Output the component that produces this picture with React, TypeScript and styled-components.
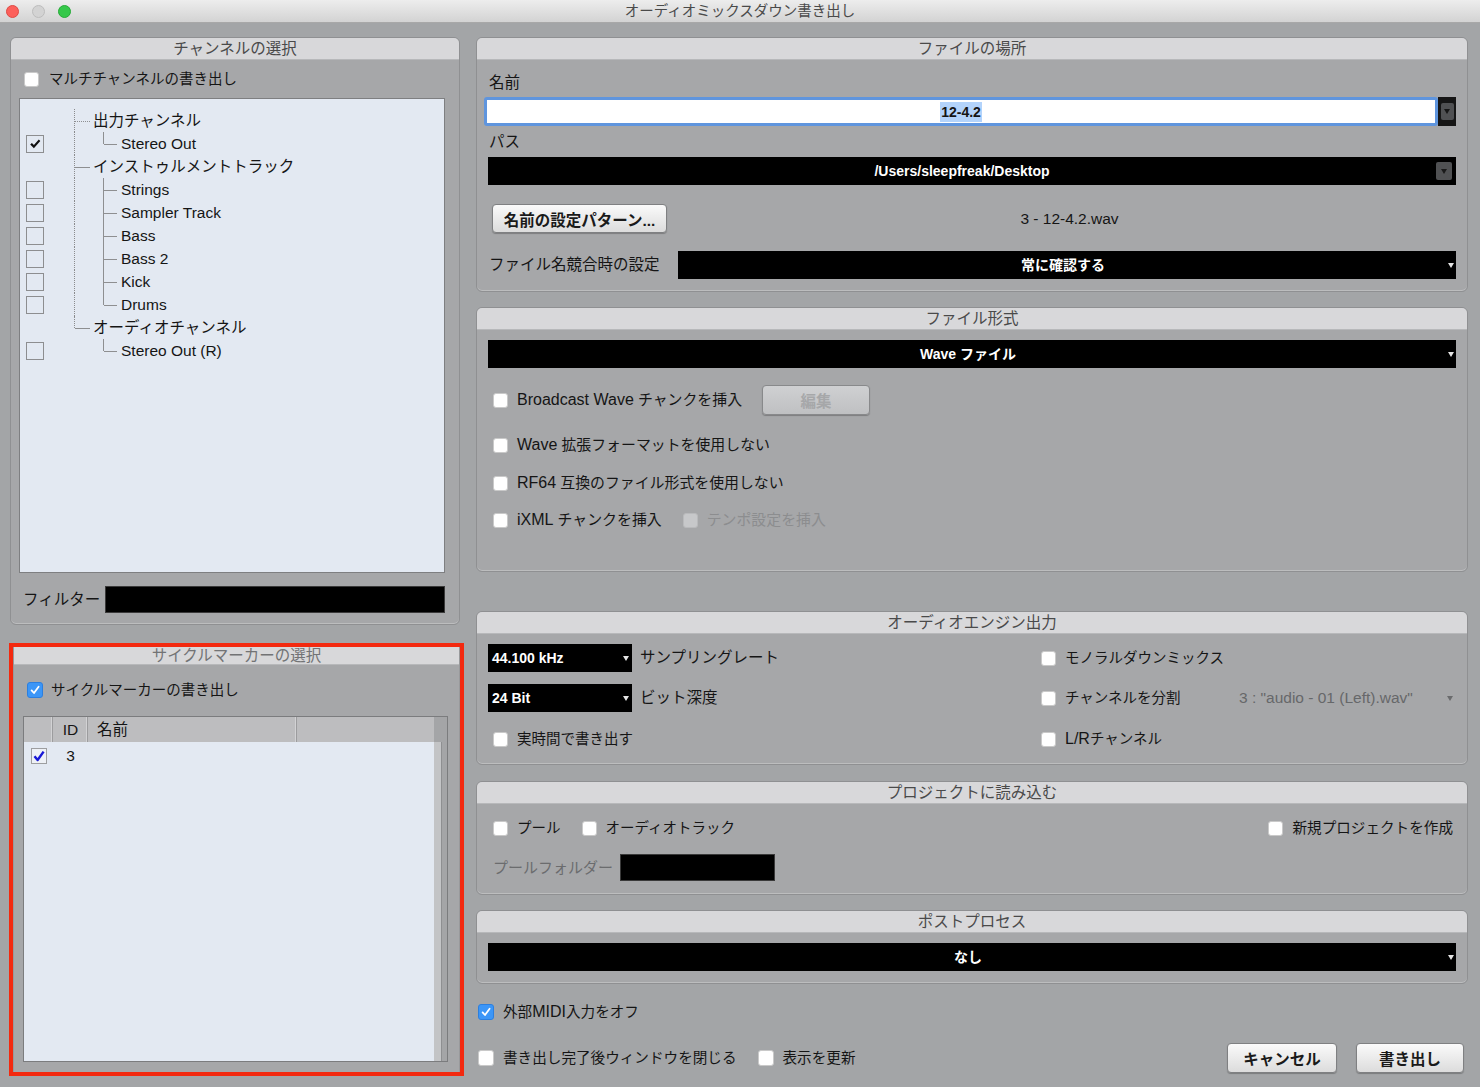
import React from 'react';
import styled, { createGlobalStyle } from 'styled-components';

const SANS = `"Liberation Sans", "Noto Sans CJK JP", sans-serif`;

const GlobalStyle = createGlobalStyle`
  html, body { margin: 0; padding: 0; background: #a3a5a7; }
  body { font-family: ${SANS}; color: #151515; }
  * { box-sizing: border-box; }
`;

const Window = styled.div`
  width: 1480px;
  height: 1087px;
  overflow: hidden;
  display: flex;
  flex-direction: column;
  background: #a3a5a7;
`;

const TitleBar = styled.header`
  flex: none;
  height: 23px;
  display: grid;
  grid-template-columns: 1fr auto 1fr;
  align-items: center;
  padding: 0 6px;
  background: linear-gradient(#ededed, #d3d3d3);
  border-bottom: 1px solid #a8a8a8;
`;

const Lights = styled.div`
  display: flex;
  gap: 13px;
`;

const Light = styled.span<{ $c: string; $b: string }>`
  width: 13px;
  height: 13px;
  border-radius: 50%;
  background: ${p => p.$c};
  border: 1px solid ${p => p.$b};
`;

const Title = styled.div`
  font-size: 14.5px;
  line-height: 22px;
  color: #4a4a4a;
`;

const Main = styled.main`
  flex: 1;
  display: flex;
  gap: 12px;
  padding: 14px 0 0 9px;
`;

const Column = styled.div<{ $w: number }>`
  width: ${p => p.$w}px;
  flex: none;
  display: flex;
  flex-direction: column;
`;

const Panel = styled.section<{ $h: number; $mt?: number; $ml?: number; $w?: number }>`
  flex: none;
  height: ${p => p.$h}px;
  width: ${p => (p.$w ? `${p.$w}px` : 'auto')};
  margin-top: ${p => p.$mt ?? 0}px;
  margin-left: ${p => p.$ml ?? 0}px;
  display: flex;
  flex-direction: column;
  background: #a6a7a9;
  border: 1px solid #8f9092;
  border-radius: 6px;
  overflow: hidden;
  box-shadow: inset 0 -1px 0 rgba(255, 255, 255, 0.25);
`;

const PanelHead = styled.div<{ $h?: number; $dim?: boolean }>`
  flex: none;
  height: ${p => p.$h ?? 22}px;
  line-height: ${p => (p.$h ?? 22) - 1}px;
  text-align: center;
  background: #d8d8da;
  border-bottom: 1px solid #b7b8ba;
  font-size: 15.5px;
  color: ${p => (p.$dim ? '#727375' : '#4a4a4a')};
`;

const PanelBody = styled.div<{ $px?: number }>`
  display: flex;
  flex-direction: column;
  padding: 0 ${p => p.$px ?? 11}px;
`;

const Row = styled.div<{ $mt?: number; $h?: number; $pl?: number; $pr?: number; $w?: number }>`
  flex: none;
  display: flex;
  align-items: center;
  width: ${p => (p.$w ? `${p.$w}px` : 'auto')};
  height: ${p => p.$h ?? 24}px;
  margin-top: ${p => p.$mt ?? 0}px;
  padding-left: ${p => p.$pl ?? 0}px;
  padding-right: ${p => p.$pr ?? 0}px;
`;

const Opt = styled.label<{ $fs?: number; $dim?: boolean; $gap?: number; $mr?: number; $w?: number }>`
  display: inline-flex;
  align-items: center;
  flex: none;
  gap: ${p => p.$gap ?? 9}px;
  margin-right: ${p => p.$mr ?? 0}px;
  width: ${p => (p.$w ? `${p.$w}px` : 'auto')};
  font-size: ${p => p.$fs ?? 14.9}px;
  line-height: 20px;
  white-space: nowrap;
  color: ${p => (p.$dim ? '#8c8d8f' : '#151515')};
`;

/* latin words sit a little larger than the kana, as on the mac */
const Lat = styled.span`
  font-size: 16px;
`;

const Box = styled.span<{ $on?: boolean; $off?: boolean; $s?: number }>`
  flex: none;
  width: ${p => p.$s ?? 15}px;
  height: ${p => p.$s ?? 15}px;
  border-radius: 3px;
  display: flex;
  align-items: center;
  justify-content: center;
  background: ${p => (p.$on ? '#3c96f7' : p.$off ? '#c7c8ca' : '#ffffff')};
  border: 1px solid ${p => (p.$on ? '#2c7fdf' : p.$off ? '#b9babc' : '#c9c9c9')};
`;

const Check = ({ on, off, s }: { on?: boolean; off?: boolean; s?: number }) => (
  <Box $on={on} $off={off} $s={s}>
    {on && (
      <svg width="12" height="12" viewBox="0 0 12 12">
        <path d="M2.6 6.4 L5 9 L9.6 2.8" stroke="#fff" strokeWidth="1.8" fill="none" strokeLinecap="round" strokeLinejoin="round" />
      </svg>
    )}
  </Box>
);

const Text = styled.span<{ $fs?: number; $c?: string; $w?: number; $ml?: number }>`
  flex: none;
  font-size: ${p => p.$fs ?? 15.5}px;
  line-height: 20px;
  white-space: nowrap;
  color: ${p => p.$c ?? '#151515'};
  width: ${p => (p.$w ? `${p.$w}px` : 'auto')};
  margin-left: ${p => p.$ml ?? 0}px;
`;

const FieldLabel = styled.div<{ $mt?: number }>`
  height: 20px;
  line-height: 20px;
  margin-top: ${p => p.$mt ?? 0}px;
  margin-left: 1px;
  font-size: 15.5px;
`;

const Select = styled.div<{ $mt?: number; $w?: number; $left?: boolean }>`
  flex: ${p => (p.$w ? 'none' : '1')};
  width: ${p => (p.$w ? `${p.$w}px` : 'auto')};
  height: 28px;
  margin-top: ${p => p.$mt ?? 0}px;
  display: flex;
  align-items: center;
  background: #000;
  color: #fff;
  font-weight: bold;
  font-size: 14px;
  padding-left: ${p => (p.$left ? 4 : 0)}px;
`;

const SelectText = styled.span<{ $left?: boolean }>`
  flex: 1;
  text-align: ${p => (p.$left ? 'left' : 'center')};
  white-space: nowrap;
  line-height: 28px;
`;

const Caret = styled.span<{ $c?: string; $mr?: number }>`
  flex: none;
  width: 0;
  height: 0;
  margin-right: ${p => p.$mr ?? 3}px;
  border-left: 3.5px solid transparent;
  border-right: 3.5px solid transparent;
  border-top: 5px solid ${p => p.$c ?? '#e4e4e4'};
`;

const ArrowBtn = styled.span<{ $mr?: number; $small?: boolean }>`
  flex: none;
  width: ${p => (p.$small ? 13 : 16)}px;
  height: ${p => (p.$small ? 17 : 18)}px;
  margin-right: ${p => p.$mr ?? 4}px;
  border-radius: 2px;
  background: #505153;
  display: flex;
  align-items: center;
  justify-content: center;
`;

const NameRow = styled.div`
  flex: none;
  height: 29px;
  margin-top: 4px;
  margin-left: -4px;
  display: flex;
`;

const NameField = styled.div`
  flex: 1;
  border: 3px solid #5f95de;
  border-radius: 3px;
  background: #fff;
  display: flex;
  align-items: center;
  justify-content: center;
  font-weight: bold;
  font-size: 14px;
`;

const Selected = styled.span`
  background: #b3d3fb;
  padding: 1px 1px;
  line-height: 18px;
`;

const NameArrow = styled.div`
  flex: none;
  width: 18px;
  background: #161616;
  display: flex;
  align-items: center;
  justify-content: center;
`;

const Btn = styled.button<{ $w: number; $h?: number; $ml?: number; $dis?: boolean }>`
  flex: none;
  width: ${p => p.$w}px;
  height: ${p => p.$h ?? 30}px;
  margin-left: ${p => p.$ml ?? 0}px;
  padding: 0;
  border: 1px solid ${p => (p.$dis ? '#88898b' : '#7f8082')};
  border-radius: 4px;
  background: ${p => (p.$dis ? 'linear-gradient(#cfd0d2, #bfc0c2)' : 'linear-gradient(#fafafa, #dcdcdc)')};
  box-shadow: 0 1px 1px rgba(0, 0, 0, 0.25);
  font-family: ${SANS};
  font-weight: bold;
  font-size: 15.5px;
  color: ${p => (p.$dis ? '#a6a7a9' : '#1a1a1a')};
`;

const FileName = styled.div`
  flex: 1;
  text-align: center;
  padding-left: 16px;
  font-size: 15.5px;
`;

const BlackBox = styled.div<{ $w?: number; $ml?: number }>`
  flex: ${p => (p.$w ? 'none' : '1')};
  width: ${p => (p.$w ? `${p.$w}px` : 'auto')};
  height: 27px;
  margin-left: ${p => p.$ml ?? 0}px;
  background: #000;
  border: 1px solid #3a3a3a;
`;

const Spacer = styled.span`
  flex: 1;
`;

/* ---------- channel tree ---------- */

const TreeBox = styled.div`
  flex: none;
  width: 426px;
  height: 475px;
  margin: 9px 0 0 8px;
  padding-top: 10px;
  background: #e3e9f2;
  border: 1px solid #7e7f81;
`;

const TreeRow = styled.div`
  height: 23px;
  display: flex;
  align-items: stretch;
  font-size: 15.5px;
`;

const CheckCell = styled.div`
  flex: none;
  width: 54px;
  padding-left: 6px;
  display: flex;
  align-items: center;
`;

const TreeCheck = styled.span`
  width: 18px;
  height: 18px;
  border: 1px solid #8d8e90;
  display: flex;
  align-items: center;
  justify-content: center;
`;

type Line = 'full' | 'top' | 'none';

const Trunk = styled.span<{ $v: Line; $h?: boolean; $dot?: boolean }>`
  position: relative;
  flex: none;
  width: 19px;
  &::before {
    content: '';
    position: absolute;
    left: 0;
    top: 0;
    bottom: ${p => (p.$v === 'top' ? '50%' : '0')};
    border-left: 1px dotted #8a8b8d;
    display: ${p => (p.$v === 'none' ? 'none' : 'block')};
  }
  &::after {
    content: '';
    position: absolute;
    left: 1px;
    right: 3px;
    top: 50%;
    border-top: 1px ${p => (p.$dot ? 'dotted' : 'solid')} #8e8f91;
    display: ${p => (p.$h ? 'block' : 'none')};
  }
`;

const Branch = styled.span<{ $v: Line }>`
  position: relative;
  flex: none;
  width: 14px;
  margin: 0 4px 0 10px;
  &::before {
    content: '';
    position: absolute;
    left: 0;
    top: 0;
    bottom: ${p => (p.$v === 'top' ? '50%' : '0')};
    border-left: 1px solid #8e8f91;
  }
  &::after {
    content: '';
    position: absolute;
    left: 1px;
    right: 0;
    top: 50%;
    border-top: 1px solid #8e8f91;
  }
`;

const TreeText = styled.span`
  align-self: center;
  line-height: 20px;
  white-space: nowrap;
`;

type TreeItem = { label: string; level: 1 | 2; trunk: Line; branch?: Line; check?: 'on' | 'off'; dot?: boolean };

const tree: TreeItem[] = [
  { label: '出力チャンネル', level: 1, trunk: 'full', dot: true },
  { label: 'Stereo Out', level: 2, trunk: 'full', branch: 'top', check: 'on' },
  { label: 'インストゥルメントトラック', level: 1, trunk: 'full' },
  { label: 'Strings', level: 2, trunk: 'full', branch: 'full', check: 'off' },
  { label: 'Sampler Track', level: 2, trunk: 'full', branch: 'full', check: 'off' },
  { label: 'Bass', level: 2, trunk: 'full', branch: 'full', check: 'off' },
  { label: 'Bass 2', level: 2, trunk: 'full', branch: 'full', check: 'off' },
  { label: 'Kick', level: 2, trunk: 'full', branch: 'full', check: 'off' },
  { label: 'Drums', level: 2, trunk: 'full', branch: 'top', check: 'off' },
  { label: 'オーディオチャンネル', level: 1, trunk: 'top' },
  { label: 'Stereo Out (R)', level: 2, trunk: 'none', branch: 'top', check: 'off' },
];

/* ---------- cycle marker ---------- */

const Highlight = styled.div`
  flex: none;
  margin-top: 18px;
  height: 433px;
  width: 455px;
  border: 4px solid #f3290f;
  display: flex;
`;

const CyclePanel = styled.section`
  flex: 1;
  display: flex;
  flex-direction: column;
  background: #a6a7a9;
  border-left: 1px solid #98999b;
  border-right: 1px solid #98999b;
`;

const Table = styled.div`
  flex: none;
  width: 425px;
  height: 346px;
  margin: 16px 0 0 9px;
  display: grid;
  grid-template-columns: 1fr 13px;
  grid-template-rows: 25px 1fr;
  border: 1px solid #7b7c7e;
  background: #e3e9f2;
`;

const HeadRow = styled.div`
  display: grid;
  grid-template-columns: 29px 35px 209px 1fr;
  background: #bdbdbf;
`;

const HeadCell = styled.div<{ $center?: boolean; $last?: boolean }>`
  font-size: 15.5px;
  line-height: 25px;
  padding-left: ${p => (p.$center ? 0 : 9)}px;
  text-align: ${p => (p.$center ? 'center' : 'left')};
  box-shadow: ${p => (p.$last ? 'none' : 'inset -1px 0 #9c9c9e, inset -2px 0 #d2d2d4')};
`;

const ScrollCol = styled.div`
  grid-row: 1 / 3;
  grid-column: 2;
  background: #a4a5a7;
  padding-top: 25px;
  display: flex;
`;

const ScrollTrack = styled.div`
  width: 8px;
  background: #c3c4c6;
  border-right: 1px solid #8e8f91;
`;

const BodyRows = styled.div`
  grid-column: 1;
  grid-row: 2;
`;

const DataRow = styled.div`
  height: 28px;
  display: grid;
  grid-template-columns: 29px 35px 1fr;
  align-items: center;
`;

const RowCheck = styled.span`
  width: 16px;
  height: 16px;
  margin-left: 7px;
  border: 1px solid #9d9ea0;
  background: #eef1f6;
  display: flex;
  align-items: center;
  justify-content: center;
`;

const Cell = styled.span`
  text-align: center;
  font-size: 15.5px;
`;

export default function App() {
  return (
    <Window>
      <GlobalStyle />
      <TitleBar>
        <Lights>
          <Light $c="#fc605b" $b="#de4a44" />
          <Light $c="#d3d3d3" $b="#bdbdbd" />
          <Light $c="#35c84a" $b="#26aa37" />
        </Lights>
        <Title>オーディオミックスダウン書き出し</Title>
        <span />
      </TitleBar>

      <Main>
        <Column $w={455}>
          <Panel $h={588} $ml={1} $w={450}>
            <PanelHead>チャンネルの選択</PanelHead>
            <PanelBody $px={0}>
              <Row $mt={9} $h={20} $pl={13}>
                <Opt $fs={14.5} $gap={10}>
                  <Check />
                  マルチチャンネルの書き出し
                </Opt>
              </Row>
              <TreeBox>
                {tree.map(item => (
                  <TreeRow key={item.label}>
                    <CheckCell>
                      {item.check && (
                        <TreeCheck>
                          {item.check === 'on' && (
                            <svg width="12" height="12" viewBox="0 0 12 12">
                              <path d="M1.2 6.6 L2.9 5 L4.9 7.1 L9.8 1.6 L11.3 3.1 L4.9 10.2 Z" fill="#111" />
                            </svg>
                          )}
                        </TreeCheck>
                      )}
                    </CheckCell>
                    <Trunk $v={item.trunk} $h={item.level === 1} $dot={item.dot} />
                    {item.level === 2 && <Branch $v={item.branch ?? 'full'} />}
                    <TreeText>{item.label}</TreeText>
                  </TreeRow>
                ))}
              </TreeBox>
              <Row $mt={13} $h={27} $pl={12} $pr={14}>
                <Text>フィルター</Text>
                <BlackBox $ml={5} />
              </Row>
            </PanelBody>
          </Panel>

          <Highlight>
            <CyclePanel>
              <PanelHead $h={18} $dim>
                サイクルマーカーの選択
              </PanelHead>
              <Row $mt={15} $h={20} $pl={13}>
                <Opt $fs={14.5} $gap={8}>
                  <Check on s={16} />
                  サイクルマーカーの書き出し
                </Opt>
              </Row>
              <Table>
                <HeadRow>
                  <HeadCell />
                  <HeadCell $center>ID</HeadCell>
                  <HeadCell>名前</HeadCell>
                  <HeadCell $last />
                </HeadRow>
                <BodyRows>
                  <DataRow>
                    <RowCheck>
                      <svg width="14" height="14" viewBox="0 0 14 14">
                        <path d="M2.5 7.2 L5.6 11 L11.6 2.6" stroke="#1818d6" strokeWidth="2.4" fill="none" strokeLinejoin="round" />
                      </svg>
                    </RowCheck>
                    <Cell>3</Cell>
                    <span />
                  </DataRow>
                </BodyRows>
                <ScrollCol>
                  <ScrollTrack />
                </ScrollCol>
              </Table>
            </CyclePanel>
          </Highlight>
        </Column>

        <Column $w={992}>
          <Panel $h={255}>
            <PanelHead>ファイルの場所</PanelHead>
            <PanelBody>
              <FieldLabel $mt={13}>名前</FieldLabel>
              <NameRow>
                <NameField>
                  <Selected>12-4.2</Selected>
                </NameField>
                <NameArrow>
                  <ArrowBtn $mr={0} $small>
                    <Caret $c="#161616" $mr={0} />
                  </ArrowBtn>
                </NameArrow>
              </NameRow>
              <FieldLabel $mt={6}>パス</FieldLabel>
              <Select $mt={5}>
                <SelectText>/Users/sleepfreak/Desktop</SelectText>
                <ArrowBtn>
                  <Caret $c="#1a1a1a" $mr={0} />
                </ArrowBtn>
              </Select>
              <Row $mt={19} $h={29}>
                <Btn $w={175} $h={29} $ml={4}>名前の設定パターン...</Btn>
                <FileName>3 - 12-4.2.wav</FileName>
              </Row>
              <Row $mt={18} $h={28}>
                <Text $w={189} $ml={1}>ファイル名競合時の設定</Text>
                <Select>
                  <SelectText>常に確認する</SelectText>
                  <Caret $mr={2} />
                </Select>
              </Row>
            </PanelBody>
          </Panel>

          <Panel $h={265} $mt={15}>
            <PanelHead>ファイル形式</PanelHead>
            <PanelBody>
              <Select $mt={10}>
                <SelectText>Wave ファイル</SelectText>
                <Caret $mr={2} />
              </Select>
              <Row $mt={17} $h={30} $pl={5}>
                <Opt $mr={20}>
                  <Check />
                  <span>
                    <Lat>Broadcast Wave</Lat> チャンクを挿入
                  </span>
                </Opt>
                <Btn $w={108} $dis>編集</Btn>
              </Row>
              <Row $mt={18} $pl={5}>
                <Opt>
                  <Check />
                  <span>
                    <Lat>Wave</Lat> 拡張フォーマットを使用しない
                  </span>
                </Opt>
              </Row>
              <Row $mt={14} $pl={5}>
                <Opt>
                  <Check />
                  <span>
                    <Lat>RF64</Lat> 互換のファイル形式を使用しない
                  </span>
                </Opt>
              </Row>
              <Row $mt={13} $pl={5}>
                <Opt $mr={21}>
                  <Check />
                  <span>
                    <Lat>iXML</Lat> チャンクを挿入
                  </span>
                </Opt>
                <Opt $dim>
                  <Check off />
                  テンポ設定を挿入
                </Opt>
              </Row>
            </PanelBody>
          </Panel>

          <Panel $h={154} $mt={39}>
            <PanelHead>オーディオエンジン出力</PanelHead>
            <PanelBody>
              <Row $mt={10} $h={28}>
                <Row $h={28} $w={553}>
                  <Select $w={144} $left>
                    <SelectText $left>44.100 kHz</SelectText>
                    <Caret $mr={3} />
                  </Select>
                  <Text $ml={8}>サンプリングレート</Text>
                </Row>
                <Opt $fs={14.5}>
                  <Check />
                  モノラルダウンミックス
                </Opt>
              </Row>
              <Row $mt={12} $h={28}>
                <Row $h={28} $w={553}>
                  <Select $w={144} $left>
                    <SelectText $left>24 Bit</SelectText>
                    <Caret $mr={3} />
                  </Select>
                  <Text $ml={8}>ビット深度</Text>
                </Row>
                <Opt $w={198} $fs={14.5}>
                  <Check />
                  チャンネルを分割
                </Opt>
                <Text $c="#66686a">3 : "audio - 01 (Left).wav"</Text>
                <Spacer />
                <Caret $c="#6a6b6d" $mr={3} />
              </Row>
              <Row $mt={13} $h={28}>
                <Row $h={28} $pl={5} $w={553}>
                  <Opt $fs={14.5}>
                    <Check />
                    実時間で書き出す
                  </Opt>
                </Row>
                <Opt $fs={14.5}>
                  <Check />
                  <span>
                    <Lat>L/R</Lat>チャンネル
                  </span>
                </Opt>
              </Row>
            </PanelBody>
          </Panel>

          <Panel $h={114} $mt={16}>
            <PanelHead>プロジェクトに読み込む</PanelHead>
            <PanelBody>
              <Row $mt={12} $pl={5} $pr={3}>
                <Opt $mr={21} $fs={14.5}>
                  <Check />
                  プール
                </Opt>
                <Opt $fs={14.5}>
                  <Check />
                  オーディオトラック
                </Opt>
                <Spacer />
                <Opt $fs={14.6}>
                  <Check />
                  新規プロジェクトを作成
                </Opt>
              </Row>
              <Row $mt={14} $h={27} $pl={5}>
                <Text $c="#6b6c6e" $w={127} $fs={15}>プールフォルダー</Text>
                <BlackBox $w={155} />
              </Row>
            </PanelBody>
          </Panel>

          <Panel $h={74} $mt={15}>
            <PanelHead>ポストプロセス</PanelHead>
            <PanelBody>
              <Select $mt={10}>
                <SelectText>なし</SelectText>
                <Caret $mr={2} />
              </Select>
            </PanelBody>
          </Panel>

          <Row $mt={18} $h={20} $pl={2}>
            <Opt $fs={14.6}>
              <Check on s={16} />
              <span>
                外部<Lat>MIDI</Lat>入力をオフ
              </span>
            </Opt>
          </Row>
          <Row $mt={21} $h={30} $pl={2} $pr={4}>
            <Opt $mr={21} $fs={14.6}>
              <Check s={16} />
              書き出し完了後ウィンドウを閉じる
            </Opt>
            <Opt $fs={14.6}>
              <Check s={16} />
              表示を更新
            </Opt>
            <Spacer />
            <Btn $w={110}>キャンセル</Btn>
            <Btn $w={108} $ml={19}>書き出し</Btn>
          </Row>
        </Column>
      </Main>
    </Window>
  );
}
